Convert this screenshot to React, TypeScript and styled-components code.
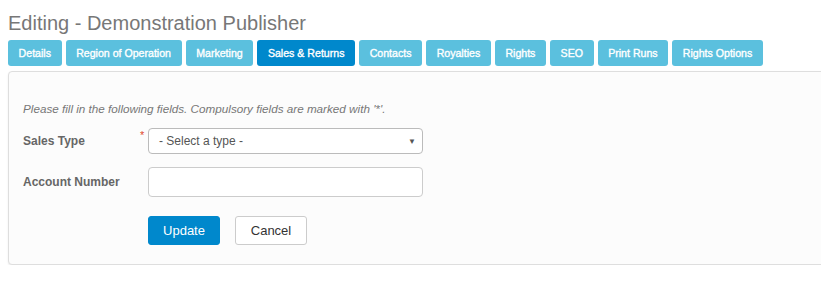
import React from "react";
import styled, { createGlobalStyle } from "styled-components";

const TABS = [
  "Details",
  "Region of Operation",
  "Marketing",
  "Sales & Returns",
  "Contacts",
  "Royalties",
  "Rights",
  "SEO",
  "Print Runs",
  "Rights Options",
];

const ACTIVE_TAB = "Sales & Returns";

const GlobalStyle = createGlobalStyle`
  html, body {
    margin: 0;
    padding: 0;
    background: #fff;
    overflow: hidden;
  }
  body {
    font-family: "Liberation Sans", Arial, sans-serif;
  }
`;

function App() {
  return (
    <Page>
      <GlobalStyle />
      <Title>Editing - Demonstration Publisher</Title>
      <TabBar>
        {TABS.map((t) => (
          <Tab key={t} active={t === ACTIVE_TAB}>
            {t}
          </Tab>
        ))}
      </TabBar>
      <Panel>
        <Intro>
          Please fill in the following fields. Compulsory fields are marked with '*'.
        </Intro>
        <FormGrid>
          <Label>Sales Type</Label>
          <Required>*</Required>
          <SelectBox>
            <span>- Select a type -</span>
            <Arrow>▼</Arrow>
          </SelectBox>

          <Label>Account Number</Label>
          <Required />
          <TextInput type="text" />

          <span />
          <span />
          <Actions>
            <Button primary>Update</Button>
            <Button>Cancel</Button>
          </Actions>
        </FormGrid>
      </Panel>
    </Page>
  );
}

export default App;

const Page = styled.div`
  padding: 11px 0 0 8px;
  width: 840px;
`;

const Title = styled.h1`
  margin: 0 0 5px;
  font-size: 20px;
  line-height: 24px;
  font-weight: normal;
  color: #777;
`;

const TabBar = styled.div`
  display: flex;
  gap: 4px;
  margin-bottom: 5px;
`;

const Tab = styled.div<{ active?: boolean }>`
  height: 26px;
  line-height: 26px;
  padding: 0 10.6px;
  font-size: 10.6px;
  color: #fff;
  background: ${(p) => (p.active ? "#0088cc" : "#5bc0de")};
  border-radius: 3px;
  -webkit-text-stroke: 0.35px #fff;
  white-space: nowrap;
`;

const Panel = styled.div`
  background: #fcfcfc;
  border: 1px solid #dedede;
  border-radius: 4px;
  box-shadow: 0 1px 2px rgba(0, 0, 0, 0.08);
  padding: 29px 14px 17px;
  height: 194px;
  box-sizing: border-box;
`;

const Intro = styled.p`
  margin: 0 0 11px;
  font-size: 11.7px;
  line-height: 16px;
  font-style: italic;
  color: #777;
`;

const FormGrid = styled.div`
  display: grid;
  grid-template-columns: 117px 8px 275px;
  row-gap: 13px;
  align-items: center;
`;

const Label = styled.div`
  font-size: 12px;
  font-weight: bold;
  color: #666;
`;

const Required = styled.span`
  align-self: start;
  margin-top: 2px;
  color: #e0452b;
  font-size: 11px;
  line-height: 11px;
`;

const SelectBox = styled.div`
  height: 26px;
  box-sizing: border-box;
  border: 1px solid #bbb;
  border-radius: 4px;
  background: #fff;
  display: flex;
  align-items: center;
  justify-content: space-between;
  padding: 0 6px 0 10px;
  font-size: 12px;
  color: #555;
`;

const Arrow = styled.span`
  font-size: 8px;
  color: #555;
`;

const TextInput = styled.input`
  height: 30px;
  box-sizing: border-box;
  border: 1px solid #ccc;
  border-radius: 4px;
  background: #fff;
  outline: none;
  width: 100%;
`;

const Actions = styled.div`
  display: flex;
  gap: 15px;
  margin-top: 6px;
`;

const Button = styled.button<{ primary?: boolean }>`
  width: 72px;
  height: 29px;
  box-sizing: border-box;
  border-radius: 3px;
  font-family: "Liberation Sans", Arial, sans-serif;
  font-size: 13px;
  cursor: pointer;
  border: 1px solid ${(p) => (p.primary ? "#0088cc" : "#ccc")};
  background: ${(p) => (p.primary ? "#0088cc" : "#fff")};
  color: ${(p) => (p.primary ? "#fff" : "#333")};
`;
